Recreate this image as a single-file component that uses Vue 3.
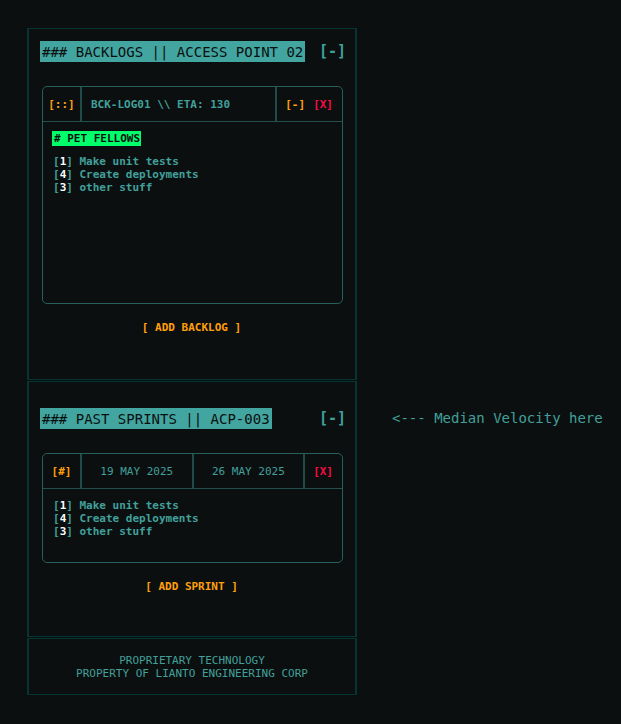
<script setup>
import { ref } from 'vue'

const tasks = ref([
  { points: 1, title: 'Make unit tests' },
  { points: 4, title: 'Create deployments' },
  { points: 3, title: 'other stuff' },
])
</script>

<template>
  <main class="page">
    <section class="panel backlogs">
      <header class="panel-head">
        <h2 class="title">### BACKLOGS || ACCESS POINT 02</h2>
        <button type="button" class="toggle" aria-label="Collapse backlogs">[-]</button>
      </header>
      <article class="card card-tall">
        <div class="card-head">
          <button type="button" class="cell grip amber">[::]</button>
          <h3 class="cell name">BCK-LOG01 \\ ETA: 130</h3>
          <div class="cell actions">
            <button type="button" class="amber">[-]</button>
            <button type="button" class="red">[X]</button>
          </div>
        </div>
        <div class="card-body">
          <p class="tag"># PET FELLOWS</p>
          <ul class="tasks">
            <li v-for="task in tasks" :key="task.title">[<b>{{ task.points }}</b>] {{ task.title }}</li>
          </ul>
        </div>
      </article>
      <button type="button" class="add amber">[ ADD BACKLOG ]</button>
    </section>

    <section class="panel sprints">
      <header class="panel-head">
        <h2 class="title">### PAST SPRINTS || ACP-003</h2>
        <button type="button" class="toggle" aria-label="Collapse past sprints">[-]</button>
      </header>
      <article class="card">
        <div class="card-head">
          <button type="button" class="cell grip amber">[#]</button>
          <time class="cell date" datetime="2025-05-19">19 MAY 2025</time>
          <time class="cell date" datetime="2025-05-26">26 MAY 2025</time>
          <div class="cell actions">
            <button type="button" class="red">[X]</button>
          </div>
        </div>
        <div class="card-body">
          <ul class="tasks">
            <li v-for="task in tasks" :key="task.title">[<b>{{ task.points }}</b>] {{ task.title }}</li>
          </ul>
        </div>
      </article>
      <button type="button" class="add amber">[ ADD SPRINT ]</button>
    </section>

    <aside class="note">&lt;--- Median Velocity here</aside>

    <footer class="panel legal">
      <p>PROPRIETARY TECHNOLOGY</p>
      <p>PROPERTY OF LIANTO ENGINEERING CORP</p>
    </footer>
  </main>
</template>

<style>
body {
  background: #0b0f0f;
}
</style>

<style scoped>
.page {
  display: grid;
  grid-template-columns: minmax(0, 5fr) minmax(0, 4fr);
  row-gap: 1px;
  padding: 28px 0 28px 27px;
  font: 11px/13px "DejaVu Sans Mono", "Liberation Mono", monospace;
  color: #42a09b;
}

h2,
h3,
p,
ul {
  margin: 0;
  padding: 0;
  font: inherit;
}

button {
  padding: 0;
  border: 0;
  background: none;
  color: inherit;
  font: inherit;
  font-weight: bold;
  cursor: pointer;
}

.amber {
  color: #ff9f0a;
}

.red {
  color: #ff0a45;
}

.panel {
  grid-column: 1;
  display: flex;
  flex-direction: column;
  border: solid #043534;
  border-width: 1px 2px;
}

.backlogs {
  padding: 12px 12px 45px 11px;
}

.sprints {
  grid-row: 2;
  padding: 26px 12px 43px 11px;
}

.panel-head {
  display: flex;
  align-items: center;
  justify-content: space-between;
  margin-bottom: 24px;
}

.title {
  padding: 1px 2px 0;
  background: #42a5a0;
  color: #0b0f0f;
  font-size: 14px;
  line-height: 20px;
  white-space: nowrap;
}

.toggle {
  margin-right: -3px;
  font-size: 15px;
  line-height: 21px;
}

.card {
  display: flex;
  flex-direction: column;
  margin-left: 2px;
  border: 1px solid #265f5b;
  border-radius: 5px;
}

.card-tall {
  min-height: 216px;
}

.card-head {
  display: flex;
  height: 34px;
  border-bottom: 1px solid #23504d;
}

.cell {
  display: flex;
  align-items: center;
  white-space: nowrap;
}

.cell + .cell {
  border-left: 2px solid #1f4b48;
}

.grip {
  justify-content: center;
  width: 37px;
}

.name {
  flex: 1;
  padding-left: 9px;
  font-weight: bold;
}

.date {
  flex: 1;
  justify-content: center;
}

.actions {
  gap: 8px;
  padding: 0 9px 0 8px;
}

.card-body {
  padding: 9px 9px 24px;
}

.tag {
  width: fit-content;
  margin-bottom: 9px;
  padding: 1px 1px 0 2px;
  background: #00ff6a;
  color: #0b0f0f;
  font-weight: bold;
  line-height: 14px;
}

.tasks {
  padding-left: 1px;
  list-style: none;
  font-weight: bold;
}

.tasks b {
  color: #fff;
}

.card-body > .tasks:first-child {
  padding-top: 1px;
}

.add {
  align-self: center;
  margin-top: 17px;
}

.note {
  grid-column: 2;
  grid-row: 2;
  padding: 27px 0 0 35px;
  font-size: 14px;
  line-height: 21px;
  white-space: nowrap;
}

.legal {
  padding: 15px 12px 14px;
  text-align: center;
}
</style>
